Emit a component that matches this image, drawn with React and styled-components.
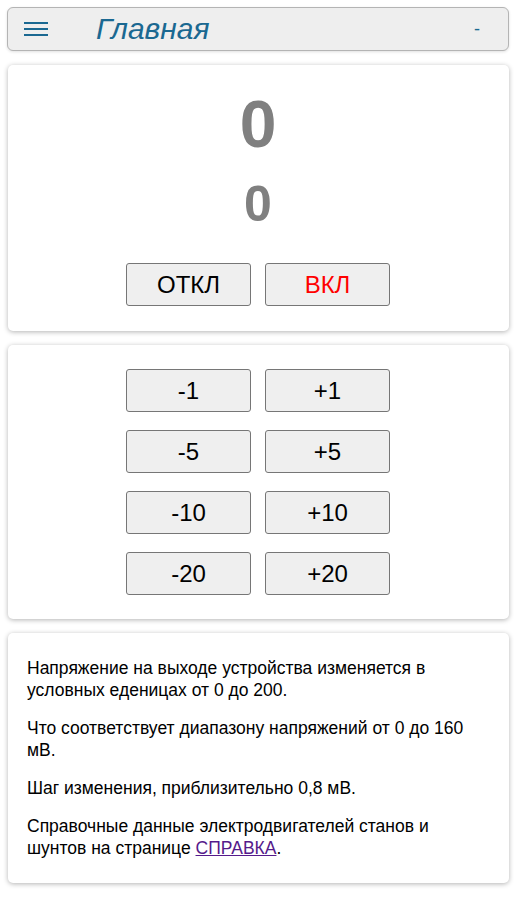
import styled, { createGlobalStyle } from "styled-components";

const GlobalStyle = createGlobalStyle`
    body {
        margin: 0;
        background: #fff;
        font-family: "Liberation Sans", Arial, sans-serif;
    }
`;

const Page = styled.div`
    display: flex;
    flex-direction: column;
    gap: 14px;
    padding: 7px 7px 14px 7px;
`;

const Header = styled.header`
    display: flex;
    align-items: center;
    height: 42px;
    padding: 0 16px;
    border: 1px solid #b4b4b4;
    border-radius: 6px;
    background: #eeeeee;
    box-shadow: 0 1px 3px rgba(0, 0, 0, 0.12);
    color: #1a6891;
`;

const Burger = styled.button`
    display: flex;
    flex-direction: column;
    gap: 4px;
    width: 24px;
    padding: 0;
    border: none;
    background: none;

    span {
        display: block;
        height: 2px;
        background: #1a6891;
    }
`;

const Title = styled.h1`
    margin: 0 0 0 48px;
    flex: 1;
    font-size: 30px;
    font-weight: 400;
    font-style: italic;
    line-height: 1;
`;

const Minus = styled.span`
    font-size: 18px;
    margin-right: 12px;
`;

const Card = styled.section`
    display: flex;
    flex-direction: column;
    align-items: center;
    margin-left: 1px;
    padding: ${p => p.$pad || "24px 25px 24px 24px"};
    border-radius: 5px;
    background: #fff;
    box-shadow: 0 1px 5px rgba(0, 0, 0, 0.3);
`;

const BigValue = styled.div`
    font-size: ${p => p.$size}px;
    font-weight: 700;
    color: #808080;
    line-height: 1;
    margin-top: ${p => p.$top}px;
`;

const ButtonGrid = styled.div`
    display: grid;
    grid-template-columns: 125px 125px;
    gap: 18px 14px;
    margin-top: ${p => p.$top || 0}px;
`;

const Button = styled.button`
    height: 43px;
    border: 1px solid #767676;
    border-radius: 3px;
    background: #efefef;
    font-family: "Liberation Sans", Arial, sans-serif;
    font-size: 24px;
    color: ${p => p.$red ? "#ff0000" : "#000"};
    cursor: pointer;
`;

const Info = styled.section`
    margin-left: 1px;
    padding: 7px 26px 8px 19px;
    border-radius: 5px;
    background: #fff;
    box-shadow: 0 1px 5px rgba(0, 0, 0, 0.3);
    overflow: hidden;
`;

const Para = styled.p`
    margin: 16px 0;
    font-size: 17.5px;
    line-height: 22px;
    color: #000;

    &:first-child {
        margin-top: 17px;
    }

    a {
        color: #551a8b;
    }
`;

const steps = [1, 5, 10, 20];

export default function App() {
    return (
        <>
            <GlobalStyle />
            <Page>
                <Header>
                    <Burger aria-label="menu">
                        <span /><span /><span />
                    </Burger>
                    <Title>Главная</Title>
                    <Minus>-</Minus>
                </Header>

                <Card $pad="0 25px 25px 24px">
                    <BigValue $size={66} $top={26}>0</BigValue>
                    <BigValue $size={50} $top={22}>0</BigValue>
                    <ButtonGrid $top={34}>
                        <Button>ОТКЛ</Button>
                        <Button $red>ВКЛ</Button>
                    </ButtonGrid>
                </Card>

                <Card>
                    <ButtonGrid>
                        {steps.map(s => [
                            <Button key={`m${s}`}>-{s}</Button>,
                            <Button key={`p${s}`}>+{s}</Button>
                        ])}
                    </ButtonGrid>
                </Card>

                <Info>
                    <Para>Напряжение на выходе устройства изменяется в условных еденицах от 0 до 200.</Para>
                    <Para>Что соответствует диапазону напряжений от 0 до 160 мВ.</Para>
                    <Para>Шаг изменения, приблизительно 0,8 мВ.</Para>
                    <Para>Справочные данные электродвигателей станов и шунтов на странице <a href="#help">СПРАВКА</a>.</Para>
                </Info>
            </Page>
        </>
    );
}
